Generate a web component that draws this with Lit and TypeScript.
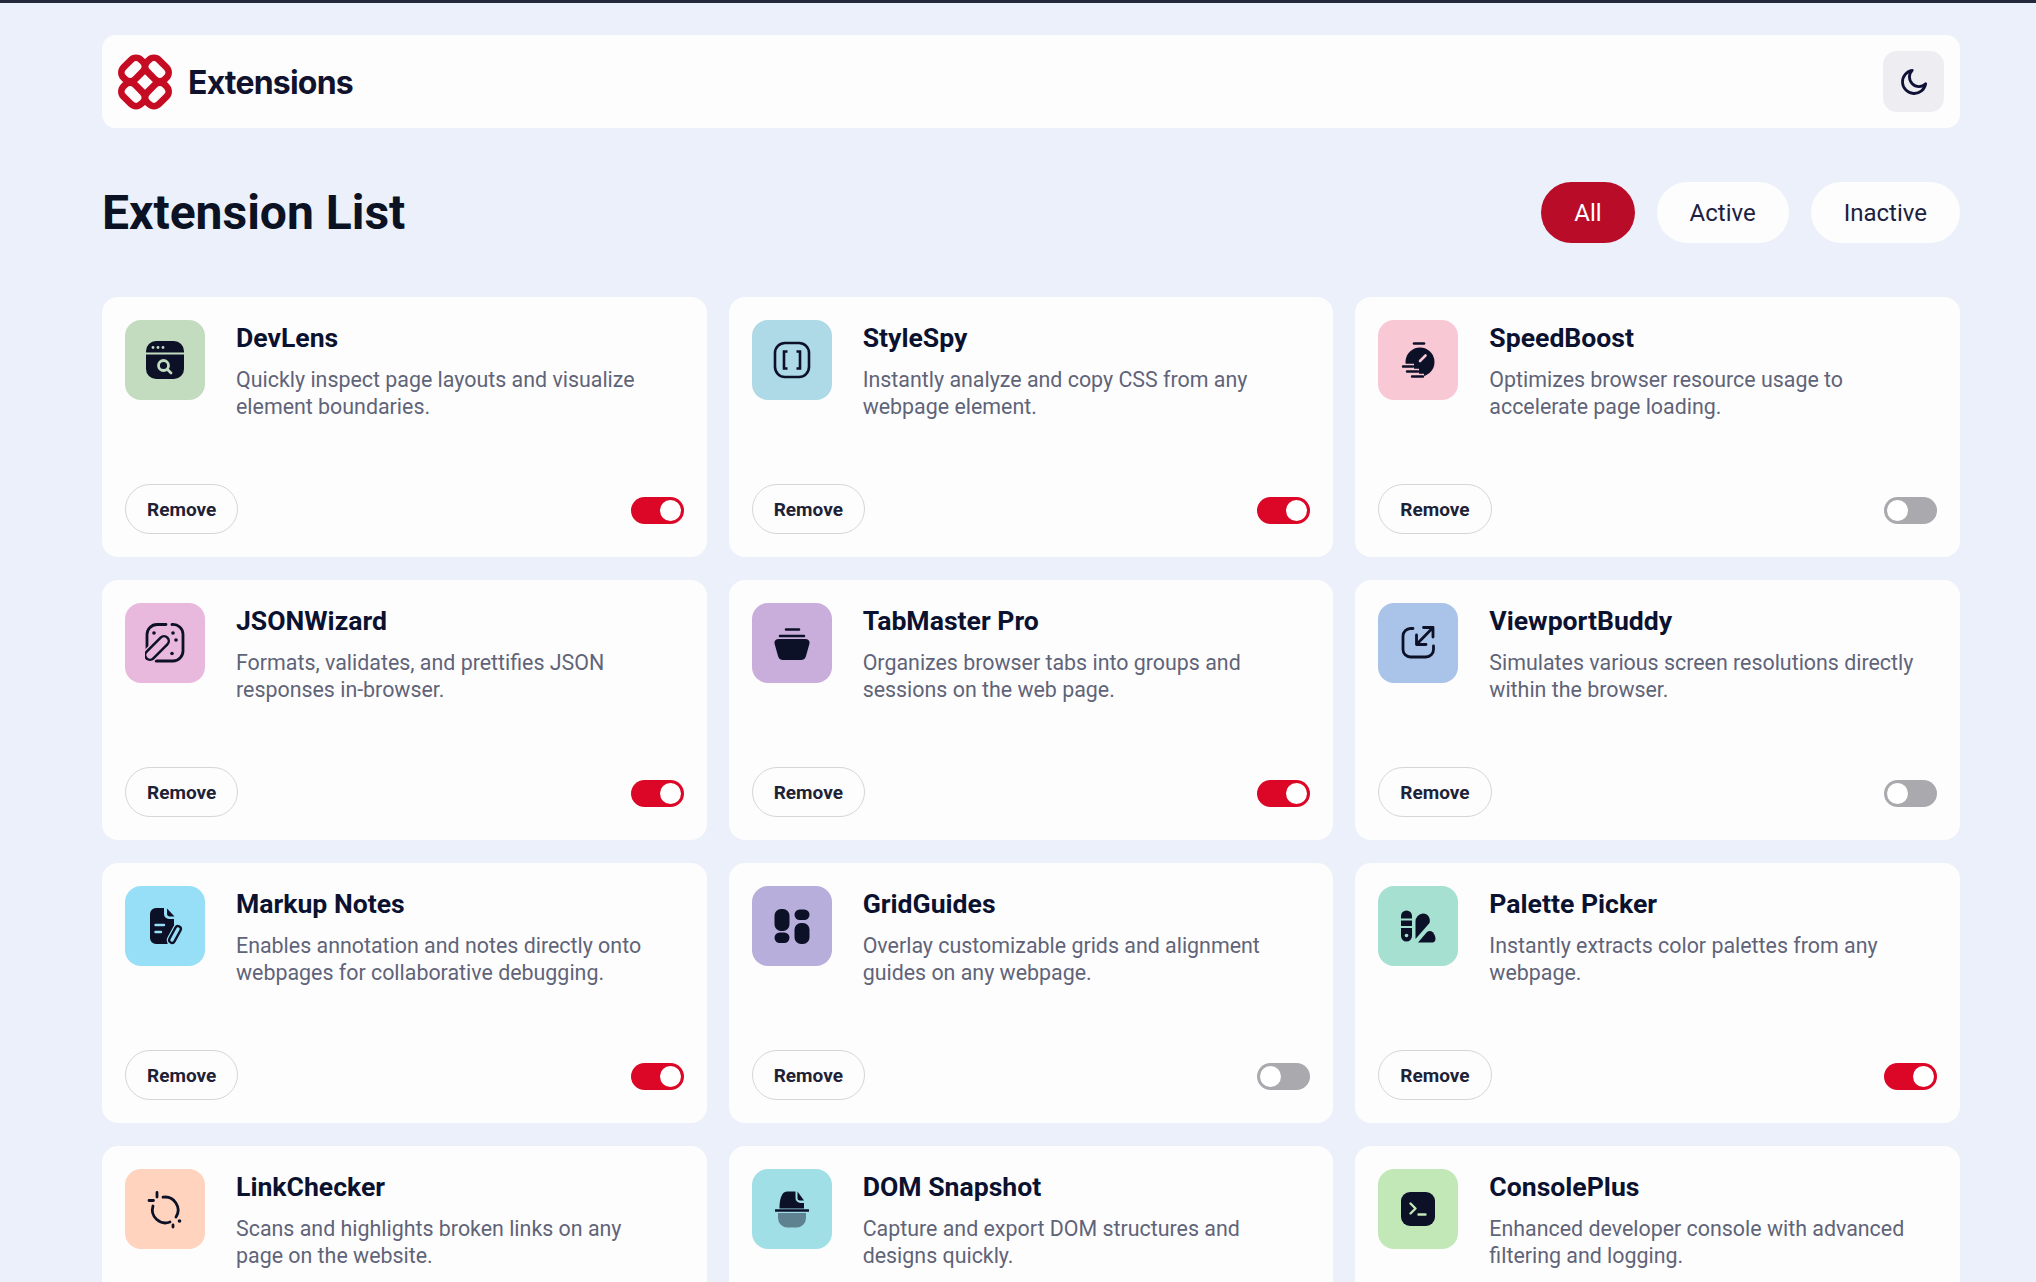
import { LitElement, css, html, svg } from "lit";
import { customElement, state } from "lit/decorators.js";

interface Extension {
  name: string;
  description: string;
  tile: string;
  icon: string;
  active: boolean;
}

const ICONS: Record<string, unknown> = {
  devlens: svg`
    <rect x="1" y="1" width="38" height="38" rx="10" fill="currentColor"/>
    <path d="M1 13.5H39" stroke="var(--tile)" stroke-width="1.8"/>
    <circle cx="8" cy="7.5" r="1.4" fill="var(--tile)"/>
    <circle cx="13" cy="7.5" r="1.4" fill="var(--tile)"/>
    <circle cx="18" cy="7.5" r="1.4" fill="var(--tile)"/>
    <circle cx="18.5" cy="25.5" r="5" fill="none" stroke="var(--tile)" stroke-width="2.8"/>
    <path d="M22.5 29.5l3.5 3.5" stroke="var(--tile)" stroke-width="2.8" stroke-linecap="round"/>`,
  stylespy: svg`
    <rect x="3" y="3" width="34" height="34" rx="10" fill="none" stroke="currentColor" stroke-width="2.6"/>
    <path d="M15.5 11.5H12V28.5H15.5M24.5 11.5H28V28.5H24.5" fill="none" stroke="currentColor" stroke-width="2.6"/>`,
  speedboost: svg`
    <circle cx="22" cy="22" r="14.5" fill="currentColor"/>
    <path d="M16 3.5H26" stroke="currentColor" stroke-width="2.6" stroke-linecap="round"/>
    <path d="M27.5 15.5L22 21" stroke="var(--tile)" stroke-width="2.6" stroke-linecap="round"/>
    <path d="M3 26.5H16M8 31.5H21M12 36.5H26" stroke="var(--tile)" stroke-width="5.5"/>
    <path d="M5 26.5H15M9 31.5H20M14 36.5H25" stroke="currentColor" stroke-width="2.4" stroke-linecap="round"/>`,
  jsonwizard: svg`
    <path d="M21 1.5H12A10 10 0 0 0 2 11.5V27A10 10 0 0 0 6 35M27 1.5A10 10 0 0 1 38 11.5V28A10 10 0 0 1 28 38H11" fill="none" stroke="currentColor" stroke-width="2.8" stroke-linecap="round"/>
    <path d="M5 32L19 18" stroke="var(--tile)" stroke-width="15" stroke-linecap="round"/>
    <path d="M5 32L19 18" stroke="currentColor" stroke-width="12" stroke-linecap="round"/>
    <path d="M5 32L19 18" stroke="var(--tile)" stroke-width="7" stroke-linecap="round"/>
    <circle cx="9" cy="10" r="1.8" fill="currentColor"/>
    <circle cx="28" cy="10" r="1.8" fill="currentColor"/>
    <circle cx="31" cy="17" r="1.8" fill="currentColor"/>
    <circle cx="27" cy="30.5" r="1.8" fill="currentColor"/>`,
  tabmaster: svg`
    <path d="M14 6.5H27M8 13H32" stroke="currentColor" stroke-width="2.6" stroke-linecap="round"/>
    <path d="M7 16H33Q38 16 37.5 20.5L34 33Q33 37 29 37H11Q7 37 6 33L2.5 20.5Q2 16 7 16Z" fill="currentColor"/>`,
  viewport: svg`
    <path d="M15 5.5H12.5A7.5 7.5 0 0 0 5 13V26.5A7.5 7.5 0 0 0 12.5 34H28A7.5 7.5 0 0 0 35.5 26.5V23" fill="none" stroke="currentColor" stroke-width="2.8" stroke-linecap="round"/>
    <path d="M25.5 4.5H35V14M18.5 12V21.5H28M18.5 21.5L35 4.5" fill="none" stroke="currentColor" stroke-width="2.8" stroke-linecap="round" stroke-linejoin="round"/>`,
  markup: svg`
    <path d="M11 2H19V8A5 5 0 0 0 24 13H29V20L23 33L22.5 38H11A6 6 0 0 1 5 32V8A6 6 0 0 1 11 2Z" fill="currentColor"/>
    <path d="M22 2.5L29.5 10.5H25A3 3 0 0 1 22 7.5Z" fill="currentColor"/>
    <path d="M10.5 19H19M10.5 26H16" stroke="var(--tile)" stroke-width="2.4" stroke-linecap="round"/>
    <path d="M27 34L33 23" stroke="var(--tile)" stroke-width="10.5" stroke-linecap="round"/>
    <path d="M27 34L33 23" stroke="currentColor" stroke-width="8" stroke-linecap="round"/>
    <path d="M27 34L33 23" stroke="var(--tile)" stroke-width="3.4" stroke-linecap="round"/>`,
  grid: svg`
    <rect x="2.5" y="3" width="15" height="22" rx="6.5" fill="currentColor"/>
    <rect x="22.5" y="3.5" width="15" height="10.5" rx="5.2" fill="currentColor"/>
    <rect x="2.5" y="26.5" width="15" height="10.5" rx="5.2" fill="currentColor"/>
    <rect x="22.5" y="17" width="15" height="21" rx="6.5" fill="currentColor"/>`,
  palette: svg`
    <path d="M3 10A5.5 5.5 0 0 1 14 10V30A5.5 5.5 0 0 1 3 30Z" fill="currentColor"/>
    <path d="M3 13.5H14M3 21H14" stroke="var(--tile)" stroke-width="2"/>
    <circle cx="8.5" cy="29.5" r="1.8" fill="var(--tile)"/>
    <path d="M17.5 33V15.5A8 8 0 0 1 25 7.5C30 7.5 33 12.5 31.5 17Z" fill="currentColor"/>
    <path d="M20 36.5L29 26C32 23.5 35.5 25.5 37 30C38.2 34 37 36.5 34 36.5Z" fill="currentColor"/>`,
  link: svg`
    <path d="M18 8.2A13 13 0 0 1 31 28M25 33A13 13 0 0 1 8 17" fill="none" stroke="currentColor" stroke-width="2.8" stroke-linecap="round"/>
    <path d="M12 3.5V8M4 11.5H8.5M28 36V38" stroke="currentColor" stroke-width="2.8" stroke-linecap="round"/>
    <circle cx="34.5" cy="32" r="1.8" fill="currentColor"/>`,
  dom: svg`
    <path d="M15 2.5H23.5V9A5 5 0 0 0 28.5 14H32V19.5H7.5C7.5 12 9 2.5 15 2.5Z" fill="currentColor"/>
    <path d="M25.5 2.5L32 11.5H28A2.5 2.5 0 0 1 25.5 9Z" fill="currentColor"/>
    <path d="M3 21.5H37" stroke="currentColor" stroke-width="2.4"/>
    <path d="M6 24H34V29A9.5 9.5 0 0 1 24.5 38.5H15.5A9.5 9.5 0 0 1 6 29Z" fill="currentColor" opacity=".45"/>`,
  console: svg`
    <rect x="3" y="3" width="34" height="34" rx="9" fill="currentColor"/>
    <path d="M12.5 14.5L17.5 19.5L12.5 24.5M20.5 25.5H27.5" fill="none" stroke="var(--tile)" stroke-width="2.4" stroke-linecap="round" stroke-linejoin="round"/>`,
};

const EXTENSIONS: Extension[] = [
  { name: "DevLens", description: "Quickly inspect page layouts and visualize element boundaries.", tile: "#c3dcc0", icon: "devlens", active: true },
  { name: "StyleSpy", description: "Instantly analyze and copy CSS from any webpage element.", tile: "#aed9e6", icon: "stylespy", active: true },
  { name: "SpeedBoost", description: "Optimizes browser resource usage to accelerate page loading.", tile: "#f8c8d5", icon: "speedboost", active: false },
  { name: "JSONWizard", description: "Formats, validates, and prettifies JSON responses in-browser.", tile: "#e8b9dc", icon: "jsonwizard", active: true },
  { name: "TabMaster Pro", description: "Organizes browser tabs into groups and sessions on the web page.", tile: "#c9aedc", icon: "tabmaster", active: true },
  { name: "ViewportBuddy", description: "Simulates various screen resolutions directly within the browser.", tile: "#a9c4e8", icon: "viewport", active: false },
  { name: "Markup Notes", description: "Enables annotation and notes directly onto webpages for collaborative debugging.", tile: "#97dff6", icon: "markup", active: true },
  { name: "GridGuides", description: "Overlay customizable grids and alignment guides on any webpage.", tile: "#b8aedb", icon: "grid", active: false },
  { name: "Palette Picker", description: "Instantly extracts color palettes from any webpage.", tile: "#a5e0d0", icon: "palette", active: true },
  { name: "LinkChecker", description: "Scans and highlights broken links on any page on the website.", tile: "#ffd3bd", icon: "link", active: true },
  { name: "DOM Snapshot", description: "Capture and export DOM structures and designs quickly.", tile: "#a0dfe6", icon: "dom", active: false },
  { name: "ConsolePlus", description: "Enhanced developer console with advanced filtering and logging.", tile: "#c2e8b8", icon: "console", active: true },
];

const FILTERS = ["All", "Active", "Inactive"];

@customElement("app-root")
export class AppRoot extends LitElement {
  @state() private filter = "All";
  @state() private items = EXTENSIONS;

  private toggle(item: Extension) {
    this.items = this.items.map((other) =>
      other === item ? { ...other, active: !other.active } : other
    );
  }

  private visibleItems() {
    if (this.filter === "All") return this.items;
    return this.items.filter((item) => item.active === (this.filter === "Active"));
  }

  render() {
    return html`
      <div class="page">
        <header class="bar">
          <div class="brand">
            <svg class="logo" viewBox="0 0 54 54" fill="none" stroke="#c60c23" stroke-width="6.5">
              <rect x="3.5" y="7" width="24" height="16" rx="7" transform="rotate(-45 15.5 15)"/>
              <rect x="26.5" y="7" width="24" height="16" rx="7" transform="rotate(45 38.5 15)"/>
              <rect x="3.5" y="31" width="24" height="16" rx="7" transform="rotate(45 15.5 39)"/>
              <rect x="26.5" y="31" width="24" height="16" rx="7" transform="rotate(-45 38.5 39)"/>
            </svg>
            <span class="brand-name">Extensions</span>
          </div>
          <button class="theme" aria-label="Toggle theme">
            <svg viewBox="0 0 24 24" fill="none" stroke="currentColor" stroke-width="2.4" stroke-linecap="round" stroke-linejoin="round">
              <path d="M22 13.5A10 10 0 1 1 10.5 2A8 8 0 0 0 22 13.5Z"/>
            </svg>
          </button>
        </header>

        <div class="heading">
          <h1>Extension List</h1>
          <div class="filters">
            ${FILTERS.map(
              (name) => html`
                <button
                  class=${name === this.filter ? "filter current" : "filter"}
                  @click=${() => (this.filter = name)}
                >${name}</button>
              `
            )}
          </div>
        </div>

        <div class="grid">
          ${this.visibleItems().map(
            (item) => html`
              <article class="card">
                <div class="info">
                  <div class="tile" style="--tile: ${item.tile}">
                    <svg viewBox="0 0 40 40">${ICONS[item.icon]}</svg>
                  </div>
                  <div class="text">
                    <h2>${item.name}</h2>
                    <p>${item.description}</p>
                  </div>
                </div>
                <div class="actions">
                  <button class="remove">Remove</button>
                  <button
                    class=${item.active ? "switch on" : "switch"}
                    role="switch"
                    aria-checked=${item.active}
                    aria-label="Toggle ${item.name}"
                    @click=${() => this.toggle(item)}
                  ></button>
                </div>
              </article>
            `
          )}
        </div>
      </div>
    `;
  }

  static styles = css`
    :host {
      display: block;
      height: 100vh;
      overflow: hidden;
      background: #ebf0fa;
      font-family: Roboto, "Liberation Sans", sans-serif;
      color: #0d1128;
    }

    *,
    *::before,
    *::after {
      box-sizing: border-box;
    }

    button {
      font: inherit;
      cursor: pointer;
      border: none;
    }

    .page {
      border-top: 3px solid #23293a;
      padding: 32px 76px 0 102px;
    }

    .bar {
      display: flex;
      align-items: center;
      justify-content: space-between;
      height: 93px;
      padding: 0 16px 0 15px;
      border-radius: 14px;
      background: #fefdfe;
    }

    .brand {
      display: flex;
      align-items: center;
      gap: 15px;
    }

    .logo {
      width: 56px;
      height: 56px;
    }

    .brand-name {
      margin-top: 2px;
      font-family: Inter, sans-serif;
      font-size: 32px;
      font-weight: 700;
      letter-spacing: -0.8px;
      color: #11132e;
    }

    .theme {
      display: grid;
      place-items: center;
      width: 61px;
      height: 61px;
      padding: 0;
      border-radius: 14px;
      background: #eeeef2;
      color: #0f1236;
    }

    .theme svg {
      width: 28px;
      height: 28px;
    }

    .heading {
      display: flex;
      align-items: center;
      justify-content: space-between;
      margin: 54px 0;
    }

    h1 {
      margin: 0;
      font-size: 48px;
      font-weight: 700;
      color: #0b1224;
    }

    .filters {
      display: flex;
      gap: 22px;
    }

    .filter {
      height: 61px;
      padding: 0 33px;
      border-radius: 31px;
      background: #fefdfe;
      font-size: 24px;
      color: #1b2140;
    }

    .filter.current {
      background: #b90c28;
      color: #fff;
    }

    .grid {
      display: grid;
      grid-template-columns: repeat(3, 1fr);
      gap: 23px 22px;
    }

    .card {
      display: flex;
      flex-direction: column;
      justify-content: space-between;
      min-height: 260px;
      padding: 23px;
      border-radius: 16px;
      background: #fefdfe;
    }

    .info {
      display: flex;
      gap: 31px;
    }

    .tile {
      flex: none;
      display: grid;
      place-items: center;
      width: 80px;
      height: 80px;
      border-radius: 16px;
      background: var(--tile);
      color: #0d1128;
    }

    .tile svg {
      width: 40px;
      height: 40px;
    }

    h2 {
      margin: 1px 0 0;
      font-size: 26.6px;
      line-height: 34px;
      font-weight: 700;
      color: #0b1230;
    }

    p {
      max-width: 430px;
      margin: 11px 0 0;
      font-size: 21.4px;
      line-height: 27px;
      color: #5f6478;
    }

    .actions {
      display: flex;
      align-items: center;
      justify-content: space-between;
    }

    .remove {
      height: 50px;
      padding: 0 21px;
      border: 1.5px solid #d5d5da;
      border-radius: 25px;
      background: #fefdfe;
      font-size: 19px;
      font-weight: 700;
      color: #1d2236;
    }

    .switch {
      position: relative;
      width: 53px;
      height: 27px;
      margin-top: 2px;
      padding: 0;
      border-radius: 14px;
      background: #aaaaae;
    }

    .switch::after {
      content: "";
      position: absolute;
      top: 3px;
      left: 3px;
      width: 21px;
      height: 21px;
      border-radius: 50%;
      background: #fff;
    }

    .switch.on {
      background: #dc0626;
    }

    .switch.on::after {
      left: 29px;
    }
  `;
}

declare global {
  interface HTMLElementTagNameMap {
    "app-root": AppRoot;
  }
}
